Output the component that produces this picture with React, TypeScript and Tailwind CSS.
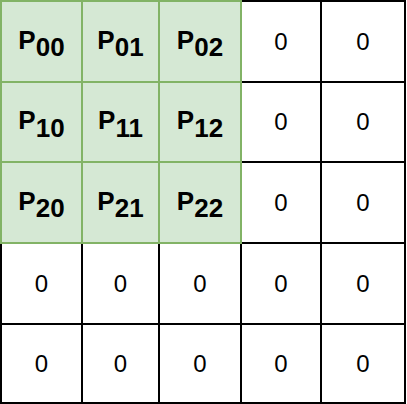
const COLS = ["83px", "77px", "82px", "80px", "84px"];
const ROWS = ["83px", "80px", "81px", "81px", "79px"];

const GREEN = "border-[#82b366] bg-[#d5e8d4]";
const PLAIN = "border-black bg-white";

function Cell({ row, col }: { row: number; col: number }) {
  const green = row < 3 && col < 3;
  return (
    <div
      className={[
        "flex items-center justify-center border-r-2 border-b-2",
        row === 0 ? "border-t-2" : "",
        col === 0 ? "border-l-2" : "",
        green ? GREEN : PLAIN,
      ].join(" ")}
    >
      {green ? (
        <span className="-mt-[4px] text-[26px] leading-none font-bold">
          P
          <sub className="text-[26px] leading-none font-bold bottom-[-0.3em]">
            {row}
            {col}
          </sub>
        </span>
      ) : (
        <span className="text-[24px] leading-none">0</span>
      )}
    </div>
  );
}

export default function App() {
  return (
    <div className="h-[404px] w-[407px] bg-white font-['Liberation_Sans',Arial,sans-serif] text-black">
      <div
        className="grid"
        style={{ gridTemplateColumns: COLS.join(" "), gridTemplateRows: ROWS.join(" ") }}
      >
        {ROWS.map((_, r) => COLS.map((_, c) => <Cell key={`${r}-${c}`} row={r} col={c} />))}
      </div>
    </div>
  );
}
